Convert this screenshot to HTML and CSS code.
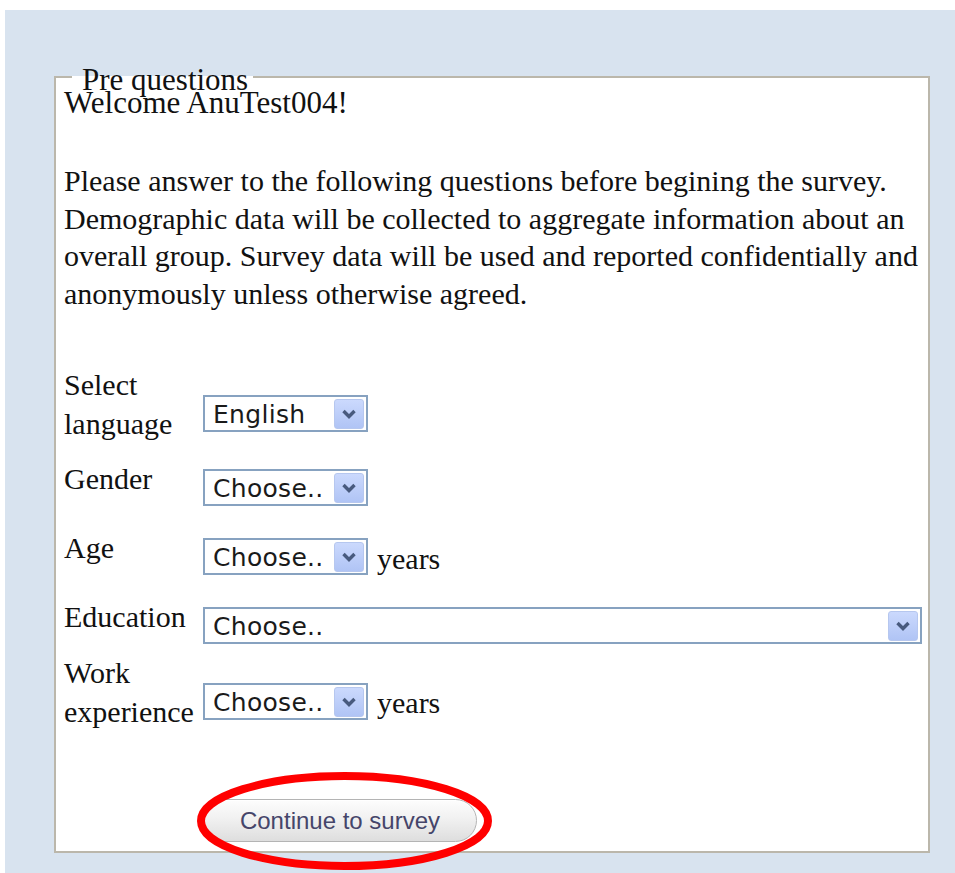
FILE: index.html
```html
<!DOCTYPE html>
<html lang="en">
<head>
<meta charset="utf-8">
<title>Pre questions</title>
<link rel="stylesheet" href="styles.css">
</head>
<body>
<div class="page">
  <fieldset class="pre">
    <legend>Pre questions</legend>
    <div class="welcome">Welcome AnuTest004!</div>
    <p class="intro">Please answer to the following questions before begining the survey.
      Demographic data will be collected to aggregate information about an overall group.
      Survey data will be used and reported confidentially and anonymously unless otherwise agreed.</p>

    <div class="form">
      <div class="row row-2line">
        <div class="label">Select<br>language</div>
        <div class="select"><span class="value">English</span><span class="arrow"><svg width="16" height="10" viewBox="0 0 16 10"><path d="M2.5 2 L8 7.5 L13.5 2" fill="none" stroke="#485a7e" stroke-width="3.4"/></svg></span></div>
      </div>
      <div class="row">
        <div class="label">Gender</div>
        <div class="select"><span class="value">Choose..</span><span class="arrow"><svg width="16" height="10" viewBox="0 0 16 10"><path d="M2.5 2 L8 7.5 L13.5 2" fill="none" stroke="#485a7e" stroke-width="3.4"/></svg></span></div>
      </div>
      <div class="row">
        <div class="label">Age</div>
        <div class="select"><span class="value">Choose..</span><span class="arrow"><svg width="16" height="10" viewBox="0 0 16 10"><path d="M2.5 2 L8 7.5 L13.5 2" fill="none" stroke="#485a7e" stroke-width="3.4"/></svg></span></div>
        <span class="unit">years</span>
      </div>
      <div class="row row-edu">
        <div class="label">Education</div>
        <div class="select select-wide"><span class="value">Choose..</span><span class="arrow"><svg width="16" height="10" viewBox="0 0 16 10"><path d="M2.5 2 L8 7.5 L13.5 2" fill="none" stroke="#485a7e" stroke-width="3.4"/></svg></span></div>
      </div>
      <div class="row row-2line">
        <div class="label">Work<br>experience</div>
        <div class="select"><span class="value">Choose..</span><span class="arrow"><svg width="16" height="10" viewBox="0 0 16 10"><path d="M2.5 2 L8 7.5 L13.5 2" fill="none" stroke="#485a7e" stroke-width="3.4"/></svg></span></div>
        <span class="unit">years</span>
      </div>
    </div>

    <div class="actions">
      <span class="btn-wrap">
        <button type="button" class="btn">Continue to survey</button>
        <svg class="mark" width="295" height="98" viewBox="0 0 295 98"><ellipse cx="147.5" cy="49" rx="143.5" ry="45" fill="none" stroke="#ff0000" stroke-width="8"/></svg>
      </span>
    </div>
  </fieldset>
</div>
</body>
</html>
```

FILE: styles.css
```css
html, body {
  margin: 0;
  padding: 0;
  background: #ffffff;
}

.page {
  margin: 10px 0 0 5px;
  padding: 52px 25px 20px 49px;
  background: #d8e3ef;
  min-height: 791px;
  font-family: "Liberation Serif", "Times New Roman", serif;
  font-size: 30px;
  color: #111111;
}

.pre {
  margin: 0;
  padding: 0 6px 9px 8px;
  border: 2px solid #bbb7ab;
  background: #ffffff;
  min-inline-size: 0;
}

/* legend text sits a little below the top border line */
.pre legend {
  margin-left: 8px;
  padding: 6px 5px 0 10px;
  font-size: 31px;
  line-height: 24px;
}

.welcome {
  margin-top: -8px;
  font-size: 31px;
  line-height: 38px;
}

.intro {
  margin: 40px 0 0 0;
  line-height: 37.5px;
}

.form {
  margin-top: 53px;
}

.row {
  display: flex;
  align-items: flex-start;
  margin-bottom: 22px;
}

.row-edu {
  margin-bottom: 9px;
}

.label {
  width: 139px;
  flex: none;
  line-height: 39px;
}

.row-2line .label {
  margin-bottom: -6px;
}

.select {
  box-sizing: border-box;
  width: 165px;
  height: 37px;
  margin-top: 10px;
  display: flex;
  align-items: center;
  justify-content: space-between;
  border: 2px solid #87a2c0;
  padding: 0 2px 0 8px;
  background: #ffffff;
  font-family: "DejaVu Sans", Verdana, sans-serif;
  font-size: 25px;
  letter-spacing: 0.3px;
  color: #1a1a1a;
}

.row-2line .select {
  margin-top: 30px;
}

.select-wide {
  flex: 1;
  width: auto;
}

.select .value {
  line-height: 1;
  padding-top: 2px;
}

.arrow {
  box-sizing: border-box;
  width: 30px;
  height: 30px;
  border: 1px solid #b6c7ef;
  border-radius: 3px;
  background: linear-gradient(#cbd9fd, #b0c4f5);
  display: flex;
  align-items: center;
  justify-content: center;
}

.unit {
  margin-top: 15px;
  margin-left: 9px;
  line-height: 32px;
}

.row-2line .unit {
  margin-top: 34px;
}

.actions {
  margin-top: 74px;
  padding-left: 139px;
}

.btn-wrap {
  position: relative;
  display: inline-block;
  vertical-align: top;
}

.btn {
  display: block;
  width: 274px;
  height: 43px;
  border: 1px solid #b4b4b4;
  border-radius: 22px;
  background: linear-gradient(#fdfdfd, #f1f1f1 45%, #dedede);
  box-shadow: inset 0 1px 0 #ffffff;
  font-family: "Liberation Sans", Arial, sans-serif;
  font-size: 24px;
  color: #45456a;
  padding: 0;
}

.mark {
  position: absolute;
  left: -6px;
  top: -27px;
  pointer-events: none;
}
```
